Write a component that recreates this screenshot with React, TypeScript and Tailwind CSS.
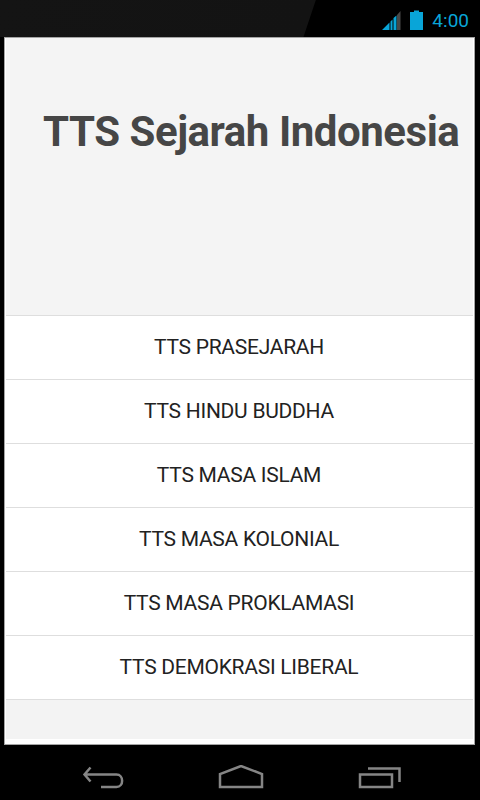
const levels = [
  'TTS PRASEJARAH',
  'TTS HINDU BUDDHA',
  'TTS MASA ISLAM',
  'TTS MASA KOLONIAL',
  'TTS MASA PROKLAMASI',
  'TTS DEMOKRASI LIBERAL',
];

function StatusBar() {
  return (
    <header className="flex h-[37px] shrink-0 items-start justify-end bg-[linear-gradient(108.5deg,#141414_0%,#131313_299px,#000_300px)] pr-[11px]">
      <svg className="mt-[10px] mr-[8px] h-5 w-5" viewBox="0 0 20 20">
        <path d="M0 20 L7.5 12.5 V20 Z M8.5 11.5 L10.5 9.5 V20 H8.5 Z M11.5 8 L14.5 5.5 V20 H11.5 Z" fill="#09a5d8" />
        <path d="M15 5 L18.5 1 V20 H15 Z" fill="#484848" />
      </svg>
      <svg className="mt-[10px] mr-[8px] h-5 w-[14px]" viewBox="0 0 14 20">
        <path d="M4 .5 H9 V2 H13 V20 H0 V2 H4 Z" fill="#09a5d8" />
      </svg>
      <span className="mt-[8px] text-[19px] leading-[25px] text-[#09a5d8]">4:00</span>
    </header>
  );
}

function NavigationBar() {
  return (
    <nav className="flex h-[55px] items-center pl-[82px] pt-[12px]">
      <svg className="h-[28px] w-[44px]" viewBox="0 0 44 28" fill="none" stroke="#858585" strokeWidth="2.5">
        <path d="M8.5 2.5 L2.5 9.5 L8.5 16.5 M3 9.5 H34.5 C42 9.5 42 22 34.5 22 H19" />
      </svg>
      <svg className="ml-[91px] h-[28px] w-[48px]" viewBox="0 0 48 28" fill="none" stroke="#858585" strokeWidth="2.5">
        <path d="M3 22 V9 L24 1 L45 9 V22 Z" />
      </svg>
      <svg className="ml-[92px] h-[28px] w-[45px]" viewBox="0 0 45 28" fill="none" stroke="#858585" strokeWidth="2.5">
        <path d="M3 9.5 H35 V22 H3 Z M11 3.5 H42.5 V17" />
      </svg>
    </nav>
  );
}

export default function App() {
  return (
    <div className="flex h-[800px] w-[480px] flex-col overflow-hidden bg-black font-[Roboto,'Liberation_Sans',sans-serif]">
      <StatusBar />
      <main className="ml-1 flex h-[708px] w-[471px] shrink-0 flex-col border border-[#a4a4a4] bg-white px-px">
        <section className="h-[277px] shrink-0 bg-[#f4f4f4] pl-[37px] pt-[69px]">
          <h1 className="text-[42px] leading-[50px] font-bold tracking-[-0.46px] whitespace-nowrap text-[#464646]">TTS Sejarah Indonesia</h1>
        </section>
        <ul className="shrink-0 border-t border-[#dedede]">
          {levels.map((level) => (
            <li key={level} className="flex h-16 items-center justify-center border-b border-[#dedede] pr-px pb-px">
              <button className="text-[21px] leading-6 tracking-[-0.27px] whitespace-nowrap text-[#222]">{level}</button>
            </li>
          ))}
        </ul>
        <div className="h-[39px] shrink-0 bg-[#f3f3f3]" />
      </main>
      <NavigationBar />
    </div>
  );
}
